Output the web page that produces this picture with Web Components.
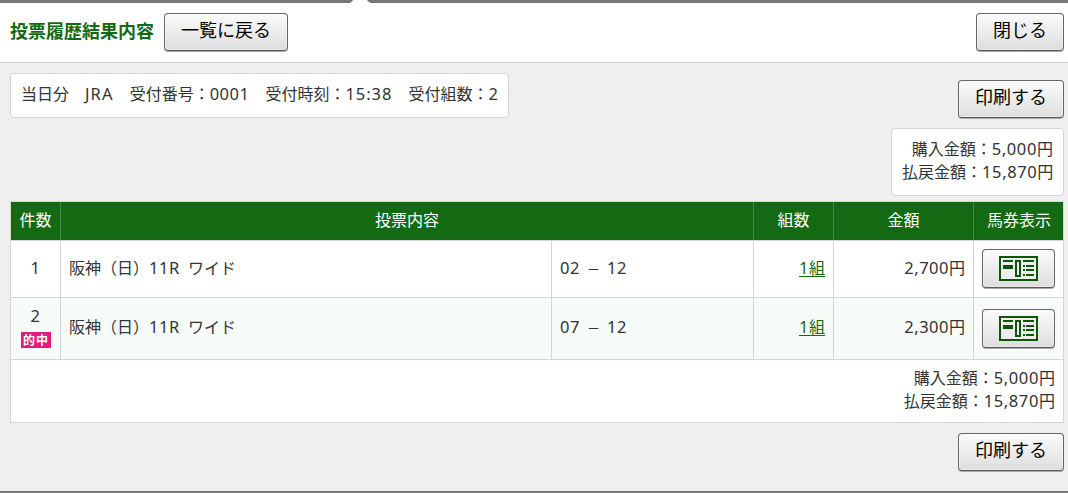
<!DOCTYPE html>
<html lang="ja">
<head>
<meta charset="utf-8">
<title>投票履歴結果内容</title>
<style>
html,body{margin:0;height:100%;overflow:hidden}
body{font:16px/23px "Noto Sans CJK JP",sans-serif;color:#333;background:#efefef}
</style>
</head>
<body>
<vote-page></vote-page>
<script>
function define(name, html, setup) {
  customElements.define(name, class extends HTMLElement {
    connectedCallback() {
      if (this.shadowRoot) return;
      const t = document.createElement('template');
      t.innerHTML = html;
      this.attachShadow({mode: 'open'}).append(t.content.cloneNode(true));
      if (setup) setup(this);
    }
  });
}

define('latin-text', `<style>
:host{font-family:"Noto Sans",sans-serif;font-size:16.5px;letter-spacing:var(--ls,.5px);line-height:1px}
</style><slot></slot>`);

define('push-button', `<style>
:host{display:block;flex:none}
button{display:block;box-sizing:border-box;width:100%;height:var(--h,38px);margin:0;padding:0 0 6px;border:1px solid #666;border-bottom-color:#5a5a5a;border-radius:4px;background:linear-gradient(#fbfbfb,#dedede);box-shadow:0 1px 0 #aaa,inset 0 0 0 1px rgba(255,255,255,.35);font:18px/30px "Noto Sans CJK JP",sans-serif;color:#000;text-align:center}
:host([icon]) button{padding:0;display:flex;align-items:center;justify-content:center;white-space:normal}
</style><button type="button"><slot></slot></button>`);

define('ticket-icon', `<style>:host{display:block;width:39px;height:25px;white-space:normal}svg{display:block}</style>
<svg width="39" height="25" viewBox="0 0 39 25" shape-rendering="crispEdges">
<rect x="1" y="1" width="37" height="23" fill="#eee" stroke="#0b5708" stroke-width="2"/>
<g fill="#0b5708"><path d="M4 4h10v2H4zM4 9h10v4H4z"/>
<path fill-rule="evenodd" d="M16 4h6v17h-6zM18 6v13h2V6z"/>
<path d="M24 4h11v2H24zM24 9h2v2h-2zM27 9h8v2h-8zM24 13h2v2h-2zM27 13h8v2h-8zM24 18h2v2h-2zM27 18h8v2h-8z"/></g></svg>`);

define('amount-lines', `<style>:host{display:block;text-align:right;white-space:nowrap;--ls:.62px}</style>
<div>購入金額：<latin-text>5,000</latin-text>円</div>
<div>払戻金額：<latin-text>15,870</latin-text>円</div>`);

define('white-panel', `<style>
:host{display:block;box-sizing:border-box;background:#fff;border:1px solid #d5d5d5;border-radius:4px;white-space:nowrap}
</style><slot></slot>`);

define('hit-badge', `<style>
:host{display:block;width:30px;height:16px;background:#e41b7b;color:#fff;font-size:12px;font-weight:700;line-height:15px;text-align:center;letter-spacing:1px;text-indent:1px}
</style><slot></slot>`);

define('page-header', `<style>
:host{display:flex;align-items:flex-start;box-sizing:border-box;height:60px;padding:10px 4px 0 10px;background:#fff;border-bottom:1px solid #d2d2d2}
h1{margin:4px 10px 0 0;font-size:18px;line-height:27px;color:#136a13;font-weight:700;width:144px;white-space:nowrap}
.back{width:124px}.close{width:88px;margin-left:auto}
</style><h1>投票履歴結果内容</h1><push-button class="back">一覧に戻る</push-button><push-button class="close">閉じる</push-button>`);

define('bet-row', `<style>
:host{display:grid;grid-template-columns:50px 491px 202px 80px 140px 90px;height:57px;background:#fff;border-bottom:1px solid #d5d5d5;box-sizing:border-box}
:host([second]){height:62px;background:#f7fcf9}
div{box-sizing:border-box;border-right:1px solid #d5d5d5;padding:0 8px 2px;display:flex;align-items:center;white-space:pre}
div:last-child{border:0;padding:0 8px 1px}
:host([second]) div:last-child{padding-bottom:0}
.no{flex-direction:column;justify-content:center;padding:0 0 2px}
.r{justify-content:flex-end}
p{margin:0;position:relative;top:-1px}
:host([second]) .no{padding:0}
:host([second]) .no p{top:-5px}
a{color:#136a13;text-decoration:underline;text-underline-offset:2px}
.dash{display:inline-block;width:18px;margin:0 1px;text-align:center;font-size:13px;line-height:1px}
push-button{width:73px;--h:39px}
</style>
<div class="no"><p><latin-text id="n"></latin-text></p></div>
<div><p>阪神（日）<latin-text>11R </latin-text> ワイド</p></div>
<div><p><latin-text id="a"></latin-text> <span class="dash">－</span> <latin-text>12</latin-text></p></div>
<div class="r"><p><a><latin-text>1</latin-text>組</a></p></div>
<div class="r"><p><latin-text id="m"></latin-text>円</p></div>
<div><push-button icon><ticket-icon></ticket-icon></push-button></div>`, el => {
  const $ = id => el.shadowRoot.getElementById(id);
  $('n').textContent = el.getAttribute('no');
  $('a').textContent = el.getAttribute('horse');
  $('m').textContent = el.getAttribute('amount');
  if (el.hasAttribute('second')) {
    const b = document.createElement('hit-badge');
    b.textContent = '的中';
    el.shadowRoot.querySelector('.no').append(b);
  }
});

define('bet-table', `<style>
:host{display:block;box-sizing:border-box;border:1px solid #d5d5d5;background:#fff}
header{display:grid;grid-template-columns:50px 693px 80px 140px 90px;height:39px;box-sizing:border-box;border-bottom:1px solid #d5d5d5;background:#136a13;color:#fff;text-align:center;line-height:34px}
header span{border-right:1px solid #428842}
header span:last-child{border:0}
footer{height:62px;box-sizing:border-box;padding:6px 8px 0}
</style>
<header><span>件数</span><span>投票内容</span><span>組数</span><span>金額</span><span>馬券表示</span></header>
<bet-row no="1" horse="02" amount="2,700"></bet-row>
<bet-row second no="2" horse="07" amount="2,300"></bet-row>
<footer><amount-lines></amount-lines></footer>`);

define('vote-page', `<style>
:host{display:flex;flex-direction:column;height:493px;background:#efefef}
.top{height:3px;background:#777875;display:flex;flex:none}
.top svg{margin-left:350px;display:block}
page-header{flex:none}
main{flex:1;padding:10px 4px 0 10px;display:flex;flex-direction:column;min-height:0}
.line{display:flex;justify-content:space-between;align-items:flex-start;height:55px;flex:none}
.info{width:499px;height:45px;padding:8px 10px 0}
.jra{--ls:1.1px}.time{--ls:.95px}
.print{width:106px;margin-top:7px}
.total{align-self:flex-end;width:173px;height:68px;padding:8px 10px 0;flex:none}
bet-table{margin-top:5px;height:222px;flex:none}
.last{align-self:flex-end;width:106px;margin-top:10px}
.bottom{height:2px;background:#777875;flex:none}
</style>
<div class="top"><svg width="21" height="3"><path d="M0 3Q2 2 3 0h14q1 2 4 3z" fill="#fff"/></svg></div>
<page-header></page-header>
<main>
<div class="line"><white-panel class="info">当日分　<latin-text class="jra">JRA</latin-text>　受付番号：<latin-text>0001</latin-text>　受付時刻：<latin-text class="time">15:38</latin-text>　受付組数：<latin-text>2</latin-text></white-panel>
<push-button class="print">印刷する</push-button></div>
<white-panel class="total"><amount-lines></amount-lines></white-panel>
<bet-table></bet-table>
<push-button class="last">印刷する</push-button>
</main>
<div class="bottom"></div>`);
</script>
</body>
</html>
